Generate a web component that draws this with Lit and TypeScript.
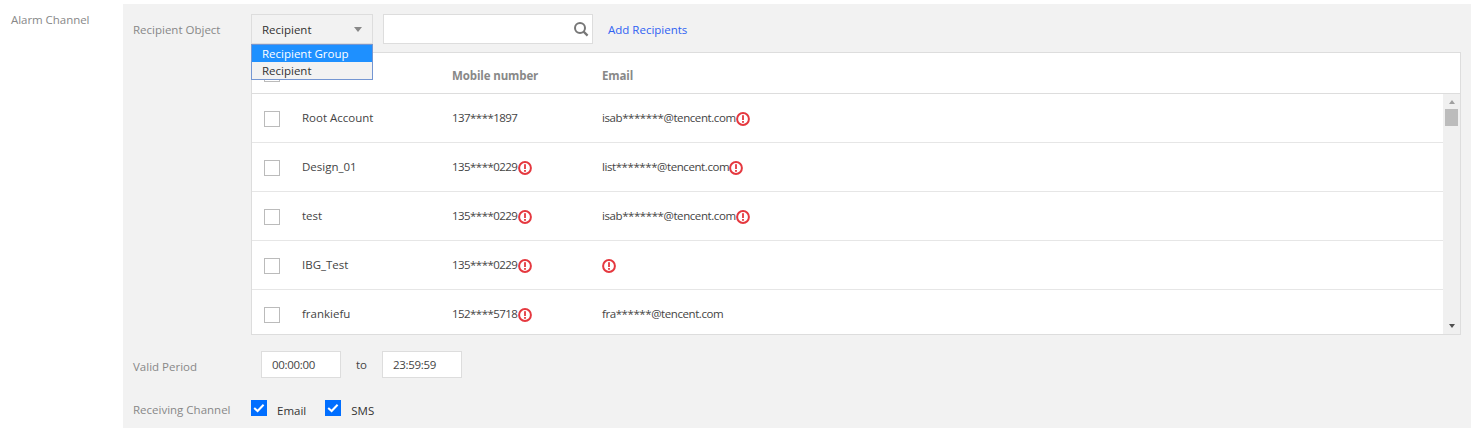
import { LitElement, html, css } from "lit";
import { customElement } from "lit/decorators.js";

const warn = () => html`<svg class="warn" viewBox="0 0 14 14" width="14" height="14" aria-hidden="true">
  <circle cx="7" cy="7" r="5.9" fill="#fff" stroke="#e5383f" stroke-width="2"></circle>
  <rect x="6.1" y="3.2" width="1.8" height="4.8" fill="#e5383f"></rect>
  <rect x="6.1" y="9" width="1.8" height="1.8" fill="#e5383f"></rect>
</svg>`;

const check = () => html`<svg class="check" viewBox="0 0 16 16" width="16" height="16" aria-hidden="true">
  <rect width="16" height="16" fill="#006eff"></rect>
  <path d="M3.2 8 L6.6 11 L12.6 4.8" fill="none" stroke="#fff" stroke-width="2"></path>
</svg>`;

interface Row { name: string; phone: string; phoneWarn: boolean; email: string; emailWarn: boolean; }
const rows: Row[] = [
  { name: "Root Account", phone: "137****1897", phoneWarn: false, email: "isab*******@tencent.com", emailWarn: true },
  { name: "Design_01", phone: "135****0229", phoneWarn: true, email: "list*******@tencent.com", emailWarn: true },
  { name: "test", phone: "135****0229", phoneWarn: true, email: "isab*******@tencent.com", emailWarn: true },
  { name: "IBG_Test", phone: "135****0229", phoneWarn: true, email: "", emailWarn: true },
  { name: "frankiefu", phone: "152****5718", phoneWarn: true, email: "fra******@tencent.com", emailWarn: false },
];

@customElement("app-root")
export class AppRoot extends LitElement {
  static styles = css`
    :host { display: block; width: 1478px; height: 428px; overflow: hidden; background: #fff;
      font-family: "Open Sans", "Noto Sans", sans-serif; font-size: 11.5px; color: #444; }
    * { box-sizing: border-box; }
    .page { display: flex; padding: 4px 7px 0 11px; height: 428px; }
    .side { width: 112px; flex: none; color: #888; padding-top: 8px; line-height: 16px; letter-spacing: -0.05px; }
    .panel { flex: 1; background: #f2f2f2; padding: 10px 10px 0 10px; display: flex; flex-direction: column; }
    .line { display: flex; align-items: center; }
    .label { width: 118px; flex: none; color: #888; }
    .top { height: 30px; position: relative; }
    .select { width: 122px; height: 30px; border: 1px solid #ddd; background: #f2f2f2; display: flex; align-items: center;
      justify-content: space-between; padding: 1px 10px 0 10px; color: #333; }
    .caret { width: 0; height: 0; border: 4px solid transparent; border-top: 5px solid #888; border-bottom: 0; }
    .menu { position: absolute; left: 118px; top: 30px; width: 122px; height: 36px; border: 1px solid #7496d2; background: #f2f2f2; z-index: 2; color: #333; }
    .opt { height: 17px; line-height: 17px; padding-left: 10px; }
    .opt.on { background: #1e90ff; color: #fff; }
    .search { margin-left: 10px; width: 210px; height: 30px; border: 1px solid #ddd; background: #fff; display: flex; align-items: center; justify-content: flex-end; padding-right: 3px; }
    .link { margin-left: 15px; color: #2f62f2; }
    .table { margin: 8px 0 0 118px; width: 1210px; height: 283px; border: 1px solid #ddd; background: #fff; display: flex; flex-direction: column; }
    .head { height: 41px; flex: none; display: flex; align-items: center; border-bottom: 1px solid #ddd; font-weight: 700; color: #888; padding-top: 4px; letter-spacing: -0.12px; }
    .head .box { margin-top: -2px; }
    .body { flex: 1; display: flex; min-height: 0; }
    .rows { flex: 1; overflow: hidden; min-width: 0; }
    .row { height: 49px; flex: none; display: flex; align-items: center; border-bottom: 1px solid #e6e6e6; }
    .row span { padding-bottom: 2px; }
    .c0 { width: 200px; flex: none; display: flex; align-items: center; padding-left: 12px; }
    .box { width: 16px; height: 16px; border: 1px solid #bbb; background: #fff; margin-right: 22px; flex: none; }
    .row .box { margin-top: 2px; }
    .c1 { width: 150px; flex: none; display: flex; align-items: center; }
    .c1 .warn { margin-left: 1px; }
    .c2 { display: flex; align-items: center; }
    .tight { letter-spacing: -0.55px; }
    .tight2 { letter-spacing: -0.42px; }
    .warn { flex: none; margin-top: 2px; }
    .bar { width: 17px; flex: none; background: #f0f0f0; display: flex; flex-direction: column; align-items: center; position: relative; }
    .up, .down { width: 0; height: 0; border: 3.5px solid transparent; }
    .up { margin-top: 6px; border-top: 0; border-bottom: 4px solid #a0a0a0; }
    .thumb { width: 13px; height: 17px; background: #bcbcbc; margin-top: 5px; }
    .down { position: absolute; bottom: 6px; border-bottom: 0; border-top: 4px solid #505050; }
    .period { margin-top: 15px; height: 28px; }
    .period .label { padding-top: 4px; }
    .time { width: 80px; height: 27px; border: 1px solid #ddd; background: #fff; padding-left: 10px; display: flex; align-items: center; letter-spacing: -0.3px; }
    .ml { margin-left: 10px; }
    .to { width: 41px; text-align: center; }
    .recv { margin-top: 22px; height: 16px; }
    .recv .label { padding-top: 2px; }
    .ck { display: flex; align-items: center; margin-right: 19px; color: #333; }
    .ck span { margin-left: 10px; margin-top: 4px; }
  `;

  render() {
    return html`<div class="page">
      <div class="side">Alarm Channel</div>
      <div class="panel">
        <div class="line top">
          <div class="label">Recipient Object</div>
          <div class="select"><span>Recipient</span><i class="caret"></i></div>
          <div class="menu">
            <div class="opt on">Recipient Group</div>
            <div class="opt">Recipient</div>
          </div>
          <div class="search">
            <svg viewBox="0 0 16 16" width="16" height="16" aria-hidden="true">
              <circle cx="7" cy="7" r="5" fill="none" stroke="#777" stroke-width="2"></circle>
              <path d="M10.6 10.6 L14.6 14.6" stroke="#777" stroke-width="2.2"></path>
            </svg>
          </div>
          <div class="link">Add Recipients</div>
        </div>
        <div class="table">
          <div class="head"><div class="c0"><i class="box"></i></div><div class="c1">Mobile number</div><div class="c2">Email</div></div>
          <div class="body">
            <div class="rows">
              ${rows.map((r) => html`<div class="row">
                <div class="c0"><i class="box"></i><span>${r.name}</span></div>
                <div class="c1"><span class="tight">${r.phone}</span>${r.phoneWarn ? warn() : ""}</div>
                <div class="c2"><span class="tight2">${r.email}</span>${r.emailWarn ? warn() : ""}</div>
              </div>`)}
            </div>
            <div class="bar"><i class="up"></i><i class="thumb"></i><i class="down"></i></div>
          </div>
        </div>
        <div class="line period">
          <div class="label">Valid Period</div>
          <div class="time ml">00:00:00</div>
          <div class="to">to</div>
          <div class="time">23:59:59</div>
        </div>
        <div class="line recv">
          <div class="label">Receiving Channel</div>
          <label class="ck">${check()}<span>Email</span></label>
          <label class="ck">${check()}<span>SMS</span></label>
        </div>
      </div>
    </div>`;
  }
}
